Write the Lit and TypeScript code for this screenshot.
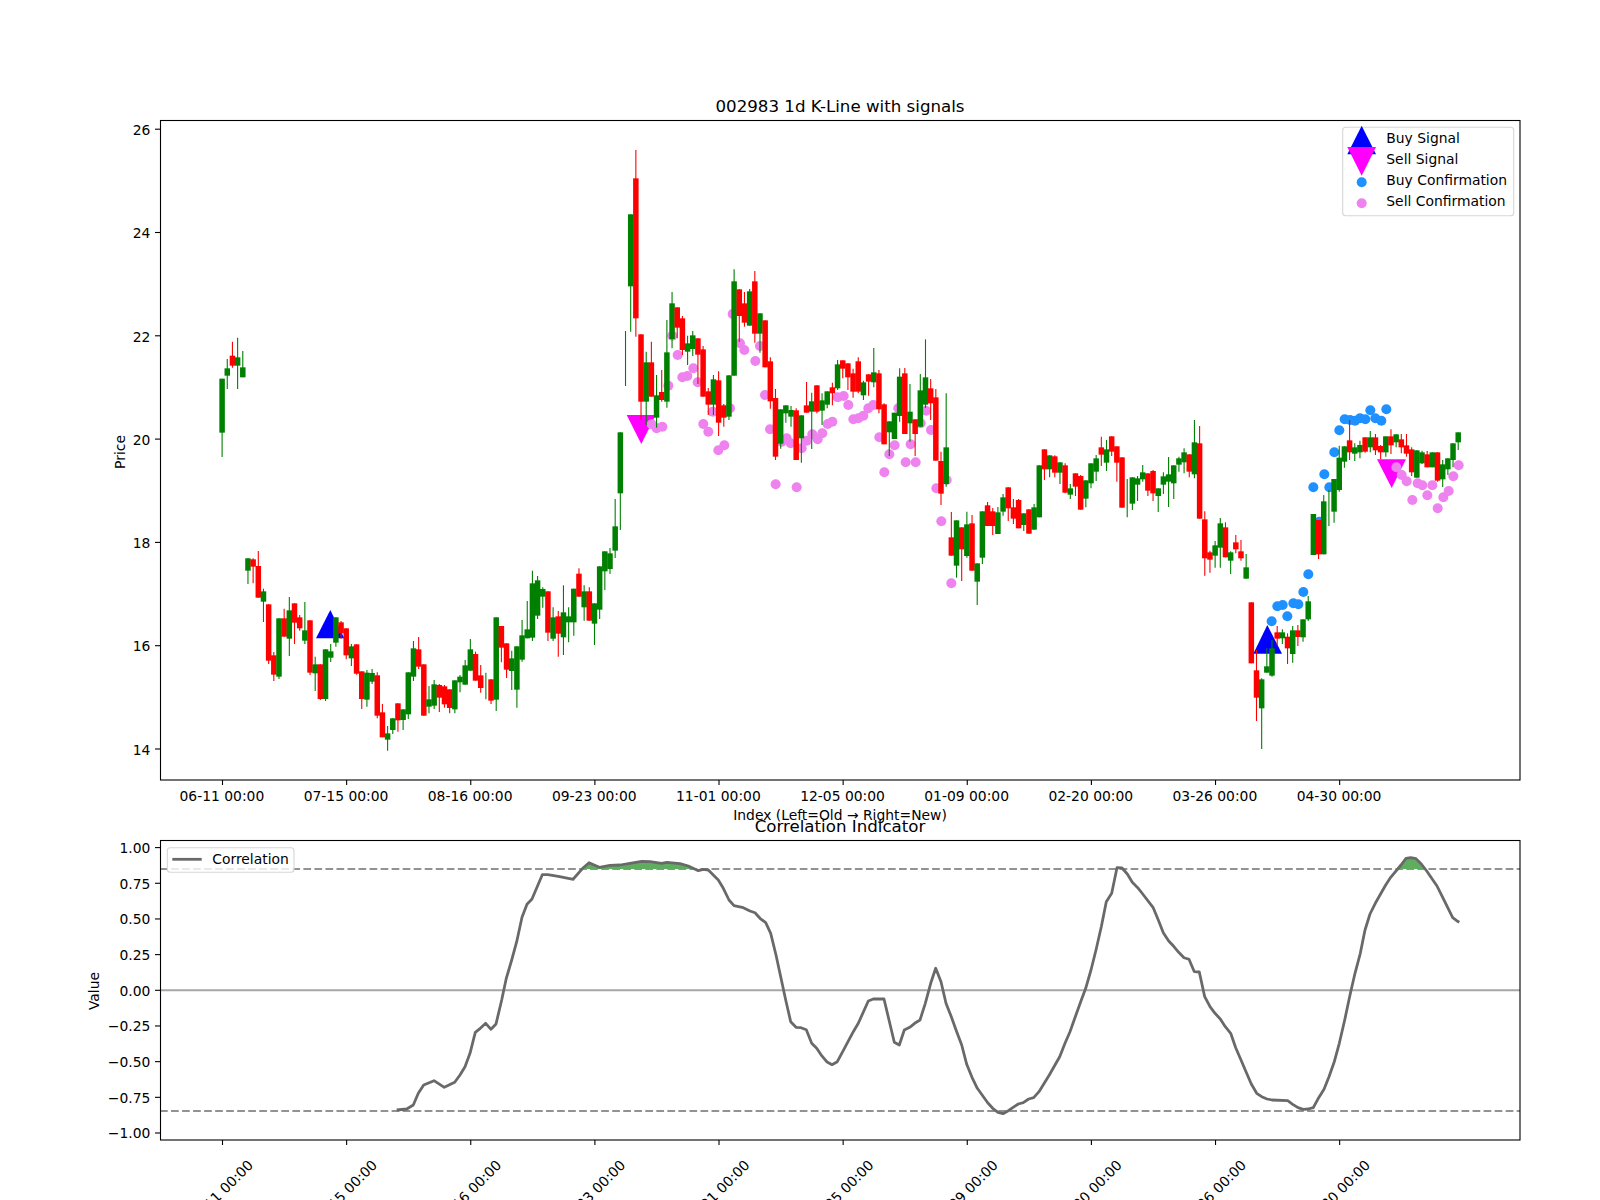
import { LitElement, html, svg, css } from "lit";
import { customElement } from "lit/decorators.js";

type Row = [number, number, number, number, number];
// each row: wick top, body top, body bottom, wick bottom, 1 = green / 0 = red. Values are at 3x from y0.
const SEGMENTS: { y0: number; rows: Row[] }[] = [
  { y0: 90, rows: [
    [866,866,1028,1101,1],[807,835,857,897,1],[755,797,827,833,0],[743,802,827,897,1],[783,832,862,862,1],
  ]},
  { y0: 500, rows: [
    [175,175,212,252,1],[175,178,200,250,0],[153,198,293,293,0],[266,274,305,366,1],[313,313,482,492,0],
    [456,466,524,543,0],[355,355,530,537,1],[326,355,410,410,0],[291,331,416,468,1],[310,310,368,432,0],
    [345,352,385,392,0],[306,391,422,432,1],[361,361,518,525,0],[470,493,520,573,1],[493,493,597,600,0],
    [448,448,597,603,1],[432,454,473,486,1],[352,352,428,440,1],[363,367,400,416,0],[385,385,466,478,0],
    [432,439,475,498,1],[433,433,521,524,0],[514,514,597,627,0],[510,518,599,620,1],[507,519,545,552,1],
    [517,526,647,655,0],[612,637,712,712,0],[678,700,719,752,1],[655,655,690,702,1],[610,610,661,695,0],
    [628,628,660,690,1],[517,517,643,657,1],[423,445,530,543,1],[411,448,500,507,0],[493,493,647,647,0],
    [558,598,620,640,1],[540,553,617,627,1],[552,555,593,636,0],[555,559,613,623,0],[568,568,624,640,0],
    [541,541,628,640,1],[525,530,547,577,1],[480,496,554,554,1],[417,448,512,512,1],[455,462,542,542,0],
    [495,526,564,578,0],[518,518,518,598,1],[538,538,602,612,0],[352,352,599,633,1],[378,378,443,487,0],
    [430,430,509,534,0],[452,475,513,570,1],[439,439,569,623,1],[360,406,479,485,1],[303,388,415,415,1],
    [212,250,413,423,1],[228,241,347,357,1],[262,267,290,323,1],[274,274,398,423,0],[322,352,416,423,1],
    [333,349,401,470,0],[256,337,412,465,1],[322,349,367,427,1],[266,266,367,407,1],[205,221,290,290,0],
    [256,274,322,362,1],[262,274,362,362,0],[310,310,371,435,1],[199,199,329,357,1],[154,154,214,270,1],
    [144,160,207,222,1],[-3,79,152,174,1],
  ]},
  { y0: 130, rows: [
    [907,907,1090,1200,1],[603,603,603,768,1],[253,253,469,605,1],[60,145,565,620,0],[613,613,815,870,0],
    [665,697,815,885,1],[635,697,800,800,0],[735,796,863,893,1],[720,786,810,815,0],[570,667,815,833,1],
    [486,520,627,655,1],[532,532,593,625,0],[558,565,660,675,0],[617,640,665,705,1],[603,616,657,678,1],
    [625,625,674,762,0],[648,658,800,800,0],[774,784,824,855,0],[735,748,824,855,1],[724,751,878,918,0],
    [822,826,863,890,0],[736,736,860,870,1],[418,454,737,737,1],[478,478,558,636,0],[486,520,578,590,0],
    [477,484,587,587,1],[423,454,611,638,0],[550,550,611,668,1],[571,571,712,712,0],[682,694,814,836,0],
    [777,804,980,990,0],[838,838,941,956,1],[826,826,850,878,1],[828,840,860,890,1],[835,841,990,990,0],
    [856,856,925,998,1],[756,826,848,848,0],[788,814,845,957,1],[766,766,845,850,0],[790,811,842,885,1],
    [784,784,824,835,1],[758,772,790,826,0],[690,703,775,780,1],[691,691,716,745,0],[700,700,742,780,0],
    [716,730,785,803,0],[682,694,785,790,0],[752,757,796,810,1],[733,733,755,797,0],[654,727,757,772,1],
    [720,730,838,850,0],[820,823,943,943,0],[874,874,907,978,1],[848,848,927,927,1],[715,740,858,875,1],
    [714,730,912,912,0],[762,845,880,935,1],[868,868,912,978,0],[732,781,890,890,1],[628,742,824,834,1],
    [747,775,820,870,0],[777,802,992,992,0],
  ]},
  { y0: 400, rows: [
    [155,183,281,315,0],[-20,142,252,260,1],[336,412,467,467,0],[361,361,497,533,1],[382,382,448,543,0],
    [335,373,468,473,1],[345,370,512,512,0],[490,490,545,615,1],[334,334,473,492,1],[306,316,378,378,0],
    [324,334,378,405,0],[321,337,402,402,1],
  ]},
  { y0: 400, rows: [
    [282,292,335,347,1],[262,262,325,363,0],[297,322,356,372,0],[297,300,385,385,0],[340,340,375,393,1],
    [328,328,401,401,0],[312,322,389,389,1],[196,196,352,352,1],[148,148,208,240,0],[166,166,208,232,1],
    [166,169,218,232,0],[187,187,218,252,1],[190,196,278,280,0],[252,265,284,297,1],[220,220,260,288,0],
    [225,228,329,329,0],[241,241,296,322,1],[190,190,250,265,1],[165,175,215,243,1],[110,142,164,198,0],
    [120,148,188,213,1],[109,109,155,168,0],[139,139,188,245,0],[172,172,323,323,0],[237,237,237,352,1],
    [232,232,311,330,1],[228,235,254,303,1],[195,217,238,245,1],[220,220,272,288,0],[210,213,280,303,0],
    [265,265,288,336,1],[217,229,254,282,1],[171,223,245,321,1],[196,196,250,297,1],[170,175,194,215,1],
    [145,157,187,220,1],[163,163,215,232,0],[60,127,223,235,1],[78,130,356,356,0],[334,358,475,527,0],
    [452,457,479,518,0],[423,436,467,503,1],[354,370,443,503,1],[367,382,472,472,0],[454,457,482,522,1],
    [405,427,448,460,0],[420,454,475,482,0],[462,502,536,536,1],[607,607,790,790,0],[750,811,893,963,0],
    [835,838,925,1047,1],[745,799,818,818,1],[720,745,827,830,1],[678,697,716,738,0],[688,697,715,732,1],
    [700,710,745,792,0],[678,691,762,788,1],[675,691,711,738,0],
  ]},
  { y0: 390, rows: [
    [688,688,742,755,1],[618,634,688,693,1],[372,372,495,495,1],[390,390,493,507,0],[315,334,493,493,1],
    [300,300,300,408,1],[267,267,365,398,1],[167,203,300,305,1],[169,169,215,233,1],[90,151,187,210,0],
    [160,172,191,213,1],[152,165,187,205,1],[142,142,185,188,0],[123,142,172,187,1],[132,142,181,195,0],
    [165,168,187,208,0],[139,139,187,200,1],[118,139,166,192,0],[133,133,157,172,1],[132,148,172,190,0],
    [132,166,191,200,0],[172,178,247,258,0],[181,181,263,263,1],[182,187,220,222,1],[183,193,232,232,0],
    [187,187,232,232,1],[187,187,272,275,0],[210,223,268,291,1],[205,205,238,255,1],[160,160,210,232,1],
    [127,127,157,180,1],
  ]},
];

const candles = SEGMENTS.flatMap((s) =>
  s.rows.map(([wt, bt, bb, wb, g]) => ({
    wt: s.y0 + wt / 3, bt: s.y0 + bt / 3, bb: s.y0 + bb / 3, wb: s.y0 + wb / 3, green: g === 1,
  }))
);

const barX = (i: number) => 222.1 + 5.172 * i;

const at = (ox: number, oy: number, pts: number[][]) =>
  pts.map(([x, y]) => [ox + x / 3, oy + y / 3]);

const violet: number[][] = [
  ...at(600, 130, [[217,617],[233,675],[247,742],[262,738],[280,715],[293,757],[205,767],[398,552],[420,640],[433,660],[466,693],[480,648],[495,795],[713,802],[731,798],[745,825],[155,883],[170,895],[187,890],[310,882],[325,905],[338,845],[390,835],[895,835]]),
  ...at(600, 400, [[355,151],[373,136],[510,88],[527,253],[545,125],[560,115],[572,130],[590,262],[605,145],[620,122],[637,103],[653,118],[667,100],[683,72],[697,65],[760,58],[775,55],[790,47],[805,25],[820,15],[838,112],[853,217],[868,163],[884,136],[917,187],[932,133],[947,187],[962,70],[978,32],[993,90],[1009,265],[1040,240],[1024,364],[1054,550]]),
  ...at(1250, 390, [[439,232],[455,255],[470,274],[487,330],[503,280],[517,286],[532,316],[547,286],[563,355],[580,322],[596,303],[610,259],[626,226]]),
];

const blue: number[][] = [
  ...at(1270, 520, [[115,163],[100,216],[85,253],[70,250],[38,255],[22,259],[52,289],[5,304]]),
  ...at(1250, 390, [[190,292],[208,395],[223,253],[238,292],[253,187],[268,121],[284,88],[300,90],[315,92],[330,85],[346,88],[361,61],[376,85],[394,92],[409,58]]),
];

const corr: number[][] = [
  ...at(80, 800, [[950,930],[980,927],[1000,915],[1015,880],[1031,855],[1062,842],[1093,862],[1124,847],[1140,825],[1155,800],[1170,760],[1186,697],[1201,685],[1217,670],[1233,688],[1248,672],[1265,600],[1279,535],[1295,480],[1310,425],[1326,352],[1341,313],[1356,297],[1387,224],[1403,224],[1435,229],[1465,235],[1480,238]]),
  ...at(560, 800, [[40,237],[70,203],[87,188],[118,202],[150,196],[180,195],[210,190],[245,184],[270,185],[305,190],[320,187],[360,191],[385,198],[415,212],[430,208],[445,210],[475,240],[490,265],[507,300],[522,317],[550,323],[570,333],[585,338],[600,355],[617,368],[632,400],[648,465],[662,530],[677,600],[692,665],[708,682],[723,683],[739,689],[755,730],[770,745],[785,767],[800,785],[816,794],[832,785],[848,755],[880,695],[895,670],[925,603],[940,597],[972,597],[987,660],[1003,727],[1018,735],[1033,690],[1049,682],[1064,670],[1080,660],[1096,610],[1112,550],[1127,505],[1143,545],[1158,610],[1174,650],[1189,692],[1205,735],[1220,793],[1236,832],[1252,865],[1283,908],[1298,925],[1314,937],[1329,941],[1345,932],[1375,912],[1390,908],[1406,897],[1421,893],[1437,875],[1468,825]]),
  ...at(1040, 800, [[59,770],[75,730],[90,695],[106,650],[122,605],[137,565],[153,510],[168,450],[184,380],[199,305],[215,280],[231,203],[246,204],[262,222],[277,247],[293,263],[308,282],[339,322],[355,360],[370,398],[386,423],[401,439],[416,457],[432,473],[447,478],[463,515],[478,516],[494,590],[510,620],[525,640],[541,657],[556,680],[572,700],[587,743],[603,780],[618,815],[634,852],[650,880],[665,890],[681,897],[696,900],[743,902],[758,913],[774,923],[790,928],[805,927],[820,923],[836,893],[852,868],[867,830],[883,785],[898,730],[914,660],[930,585],[945,520],[961,460],[975,390],[990,342],[1006,310],[1037,255],[1052,232],[1083,195],[1098,175],[1112,173],[1128,176],[1144,192],[1160,213],[1191,258],[1207,290],[1238,353],[1250,362],[1258,367]]),
];

const fills: number[][][] = [
  at(560, 800, [[62,207],[70,203],[87,188],[118,202],[150,196],[180,195],[210,190],[245,184],[270,185],[305,190],[320,187],[360,191],[385,198],[398,207]]),
  at(1040, 800, [[1073,207],[1083,195],[1098,175],[1112,173],[1128,176],[1144,192],[1155,207]]),
];

const DATES = ["06-11","07-15","08-16","09-23","11-01","12-05","01-09","02-20","03-26","04-30"];
const tickX = DATES.map((_, i) => barX(i * 24) + 0.4);

const priceTicks = [26, 24, 22, 20, 18, 16, 14];
const priceY = (p: number) => 749 - (p - 14) * 51.65;
const valueTicks = ["1.00","0.75","0.50","0.25","0.00","−0.25","−0.50","−0.75","−1.00"];
const valueY = (v: number) => 990.3 - 142.7 * v;

const tri = (p: number[][]) => p.map((q) => q.join(",")).join(" ");
const poly = (p: number[][]) => p.map((q) => q[0].toFixed(1) + "," + q[1].toFixed(1)).join(" ");

@customElement("app-root")
export class AppRoot extends LitElement {
  static styles = css`
    :host { display: block; width: 1600px; height: 1200px; background: #fff; overflow: hidden; }
    svg { display: block; }
    text { font-family: "DejaVu Sans", sans-serif; font-size: 13.89px; fill: #000; }
    .title { font-size: 16.67px; text-anchor: middle; }
    .mid { text-anchor: middle; }
    .end { text-anchor: end; }
    .spine { fill: none; stroke: #000; stroke-width: 1.1; }
    .tick { stroke: #000; stroke-width: 1.1; }
    .wick { stroke-width: 1.1; }
    .up { stroke: #008000; fill: #008000; }
    .down { stroke: #f00; fill: #f00; }
    .body { stroke: none; }
    .buy-dot { fill: #1e90ff; }
    .sell-dot { fill: #ee82ee; }
    .buy { fill: #00f; }
    .sell { fill: #f0f; }
    .legend { fill: #fff; fill-opacity: 0.8; stroke: #d6d6d6; stroke-width: 1.1; }
    .dash { stroke: #929292; stroke-width: 2.08; stroke-dasharray: 7.7 3.33; }
    .zero { stroke: #a6a6a6; stroke-width: 2.08; }
    .corr { fill: none; stroke: #696969; stroke-width: 2.78; stroke-linejoin: round; }
    .corr-key { stroke: #696969; stroke-width: 2.78; }
    .fill { fill: #5fae5f; }
  `;

  render() {
    return html`<svg width="1600" height="1200" viewBox="0 0 1600 1200">
      ${this.priceChart()}
      ${this.corrChart()}
    </svg>`;
  }

  priceChart() {
    return svg`
      <polygon class="buy" points=${tri([[330.3,610],[316,638.3],[344.3,638.3]])}></polygon>
      <polygon class="buy" points=${tri([[1267.3,625],[1253.3,653.7],[1282,653.7]])}></polygon>
      <polygon class="sell" points=${tri([[626.7,415],[655.7,415],[641.3,444]])}></polygon>
      <polygon class="sell" points=${tri([[1377,459.3],[1406,459.3],[1391.7,488]])}></polygon>
      ${blue.map(([x, y]) => svg`<circle class="buy-dot" cx=${x} cy=${y} r="5"></circle>`)}
      ${violet.map(([x, y]) => svg`<circle class="sell-dot" cx=${x} cy=${y} r="5"></circle>`)}
      ${candles.map((c, i) => {
        const x = barX(i);
        const k = c.green ? "up" : "down";
        return svg`<line class="wick ${k}" x1=${x} x2=${x} y1=${c.wt} y2=${c.wb}></line>
          ${c.bb > c.bt ? svg`<rect class="body ${k}" x=${x - 2.75} y=${c.bt} width="5.5" height=${c.bb - c.bt}></rect>` : ""}`;
      })}
      <rect class="spine" x="160.5" y="120.5" width="1359.5" height="659.5"></rect>
      ${priceTicks.map((p) => svg`
        <line class="tick" x1="155" x2="160" y1=${priceY(p)} y2=${priceY(p)}></line>
        <text class="end" x="150.3" y=${priceY(p) + 5.7}>${p}</text>`)}
      ${DATES.map((d, i) => svg`
        <line class="tick" x1=${tickX[i]} x2=${tickX[i]} y1="780" y2="785"></line>
        <text class="mid" x=${tickX[i] - 0.6} y="801">${d} 00:00</text>`)}
      <text class="title" x="840" y="111.7">002983 1d K-Line with signals</text>
      <text class="mid" x="840" y="820">Index (Left=Old → Right=New)</text>
      <text class="mid" transform="translate(125 452) rotate(-90)">Price</text>

      <rect class="legend" x="1342.7" y="127.3" width="171" height="88.4" rx="3"></rect>
      <polygon class="buy" points=${tri([[1361.7,125.7],[1347.3,154.3],[1376,154.3]])}></polygon>
      <polygon class="sell" points=${tri([[1347.3,147],[1376,147],[1361.7,175.7]])}></polygon>
      <circle class="buy-dot" cx="1361.7" cy="182.3" r="5"></circle>
      <circle class="sell-dot" cx="1361.7" cy="203.3" r="5"></circle>
      <text x="1386.3" y="142.7">Buy Signal</text>
      <text x="1386.3" y="163.7">Sell Signal</text>
      <text x="1386.3" y="184.7">Buy Confirmation</text>
      <text x="1386.3" y="205.7">Sell Confirmation</text>
    `;
  }

  corrChart() {
    return svg`
      <line class="zero" x1="160" x2="1520" y1=${valueY(0)} y2=${valueY(0)}></line>
      <line class="dash" x1="160" x2="1520" y1="869" y2="869"></line>
      <line class="dash" x1="160" x2="1520" y1="1111" y2="1111"></line>
      ${fills.map((f) => svg`<polygon class="fill" points=${poly(f)}></polygon>`)}
      <polyline class="corr" points=${poly(corr)}></polyline>
      <rect class="spine" x="160.5" y="840.5" width="1359.5" height="299.5"></rect>
      ${valueTicks.map((t, i) => {
        const y = valueY(1 - i * 0.25);
        return svg`
          <line class="tick" x1="155" x2="160" y1=${y} y2=${y}></line>
          <text class="end" x="150.3" y=${y + 5.4}>${t}</text>`;
      })}
      ${DATES.map((d, i) => svg`
        <line class="tick" x1=${tickX[i]} x2=${tickX[i]} y1="1140" y2="1145"></line>
        <text class="mid" transform="translate(${tickX[i] + 1.5} 1196) rotate(-45)">${d} 00:00</text>`)}
      <text class="title" x="840" y="832">Correlation Indicator</text>
      <text class="mid" transform="translate(99 991) rotate(-90)">Value</text>
      <rect class="legend" x="167.3" y="847.7" width="126.7" height="24.6" rx="3"></rect>
      <line class="corr-key" x1="172.3" x2="201.7" y1="859.3" y2="859.3"></line>
      <text x="212.3" y="864">Correlation</text>
    `;
  }
}
